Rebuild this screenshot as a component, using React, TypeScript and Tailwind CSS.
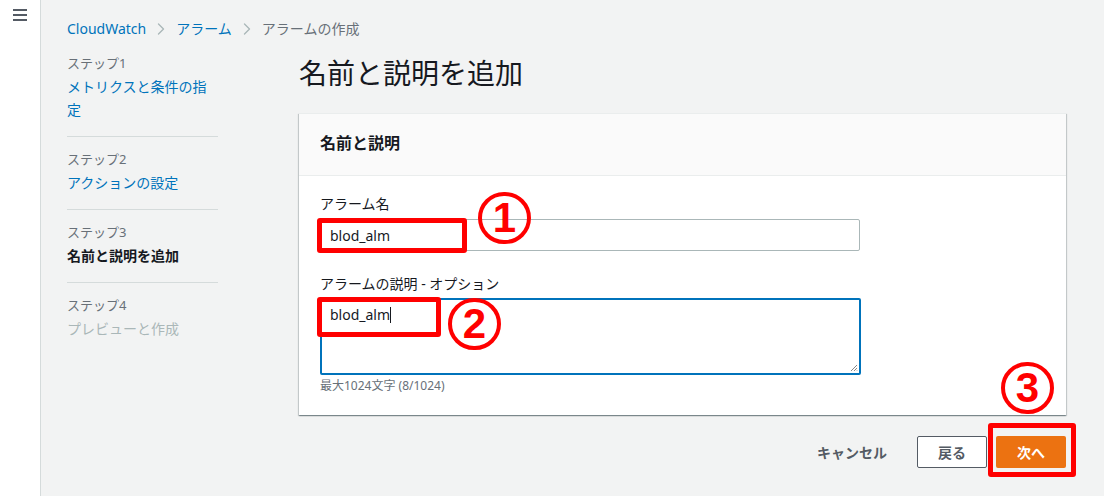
import React from 'react';
import { ChevronRight } from 'lucide-react';

const FONT = { fontFamily: '"Noto Sans", "Noto Sans CJK JP", sans-serif' };
const DIGIT = { fontFamily: '"Liberation Sans", Arial, sans-serif' };

type Step = { label: string; title: string; state: 'link' | 'current' | 'disabled' };

const steps: Step[] = [
  { label: 'ステップ1', title: 'メトリクスと条件の指定', state: 'link' },
  { label: 'ステップ2', title: 'アクションの設定', state: 'link' },
  { label: 'ステップ3', title: '名前と説明を追加', state: 'current' },
  { label: 'ステップ4', title: 'プレビューと作成', state: 'disabled' },
];

function Marker({ box }: { box: string }) {
  // red annotation frame drawn over the screenshot
  return <div className={`absolute border-[5px] border-[#ff0000] rounded-[3px] pointer-events-none ${box}`} />;
}

function Circled({ n, pos }: { n: string; pos: string }) {
  return (
    <div
      className={`absolute w-[53px] h-[52px] rounded-full border-[4px] border-[#ff0000] flex items-center justify-center pointer-events-none ${pos}`}
    >
      <span className="text-[42px] leading-none font-bold text-[#ff0000]" style={DIGIT}>
        {n}
      </span>
    </div>
  );
}

export default function App() {
  return (
    <div className="w-[1104px] h-[496px] flex overflow-hidden relative text-[#16191f]" style={FONT}>
      {/* collapsed side nav */}
      <aside className="w-[41px] shrink-0 bg-white border-r border-[#d5dbdb] pt-[9px] pl-[13px]">
        <div className="flex flex-col gap-[3px] w-[14px]">
          <span className="h-[2px] bg-[#545b64]" />
          <span className="h-[2px] bg-[#545b64]" />
          <span className="h-[2px] bg-[#545b64]" />
        </div>
      </aside>

      <main className="flex-1 bg-[#f2f3f3] pl-[26px] pr-[38px]">
        {/* breadcrumb */}
        <nav className="flex items-center h-[20px] mt-[19px] text-[14px] leading-[20px]">
          <span className="text-[#0073bb]">CloudWatch</span>
          <ChevronRight className="w-[20px] h-[20px] mx-[5px] text-[#aab7b8]" strokeWidth={1.6} />
          <span className="text-[#0073bb]">アラーム</span>
          <ChevronRight className="w-[20px] h-[20px] mx-[5px] text-[#aab7b8]" strokeWidth={1.6} />
          <span className="text-[#687078]">アラームの作成</span>
        </nav>

        <div className="flex mt-[2px]">
          {/* wizard steps */}
          <ol className="w-[151px] shrink-0">
            {steps.map((s, i) => (
              <li
                key={s.label}
                className={`pt-[11px] pb-[15px] ${i < steps.length - 1 ? 'border-b border-[#d5dbdb]' : ''}`}
              >
                <div className="text-[13px] leading-[23px] text-[#687078]">{s.label}</div>
                <div
                  className={`text-[14px] leading-[23px] ${
                    s.state === 'link'
                      ? 'text-[#0073bb]'
                      : s.state === 'current'
                      ? 'text-[#16191f] font-bold'
                      : 'text-[#aab7b8]'
                  }`}
                >
                  {s.title}
                </div>
              </li>
            ))}
          </ol>

          <section className="ml-[81px] flex-1">
            <h1 className="mt-[14px] text-[28px] leading-[36px] font-normal text-[#16191f]">名前と説明を追加</h1>

            <div className="mt-[22px] bg-white shadow-[0_1px_1px_0_rgba(0,28,36,0.3),1px_1px_1px_0_rgba(0,28,36,0.15),-1px_1px_1px_0_rgba(0,28,36,0.15)] border-t border-[#eaeded]">
              <div className="h-[62px] bg-[#fafafa] border-b border-[#eaeded] pl-[21px] pt-[18px]">
                <h2 className="text-[16px] leading-[22px] font-bold">名前と説明</h2>
              </div>

              <div className="pl-[21px] pt-[17px] pb-[20px]">
                <div className="text-[14px] leading-[22px] text-[#16191f]">アラーム名</div>
                <div className="mt-[4px] w-[540px] h-[32px] border border-[#aab7b8] rounded-[2px] flex items-center pl-[9px] text-[14px]">
                  blod_alm
                </div>

                <div className="mt-[22px] text-[14px] leading-[22px] text-[#16191f]">アラームの説明 - オプション</div>
                <div className="relative mt-[3px] w-[541px] h-[77px] border-2 border-[#0073bb] rounded-[2px] pl-[8px] pt-[4px] text-[14px] leading-[22px]">
                  <span>blod_alm</span>
                  <span className="inline-block w-px h-[16px] bg-[#16191f] align-[-3px]" />
                  <svg className="absolute right-[1px] bottom-[1px]" width="8" height="8" viewBox="0 0 8 8">
                    <path d="M7 1L1 7M7 4L4 7M7 6.5L6.5 7" stroke="#888" strokeWidth="1" />
                  </svg>
                </div>
                <div className="mt-[2px] text-[12px] leading-[18px] text-[#687078]">最大1024文字 (8/1024)</div>
              </div>
            </div>

            <div className="mt-[21px] flex items-center justify-end">
              <button className="px-[20px] h-[32px] text-[14px] font-bold text-[#545b64]">キャンセル</button>
              <button className="ml-[10px] w-[70px] h-[32px] border border-[#545b64] bg-white rounded-[2px] text-[14px] font-bold text-[#545b64]">
                戻る
              </button>
              <button className="ml-[9px] w-[70px] h-[32px] bg-[#ec7211] rounded-[2px] text-[14px] font-bold text-white">
                次へ
              </button>
            </div>
          </section>
        </div>
      </main>

      {/* annotations */}
      <Marker box="left-[317px] top-[218px] w-[150px] h-[35px]" />
      <Marker box="left-[317px] top-[297px] w-[124px] h-[40px]" />
      <Marker box="left-[988px] top-[423px] w-[88px] h-[54px]" />
      <Circled n="1" pos="left-[478px] top-[192px]" />
      <Circled n="2" pos="left-[448px] top-[298px]" />
      <Circled n="3" pos="left-[1001px] top-[362px]" />
    </div>
  );
}
